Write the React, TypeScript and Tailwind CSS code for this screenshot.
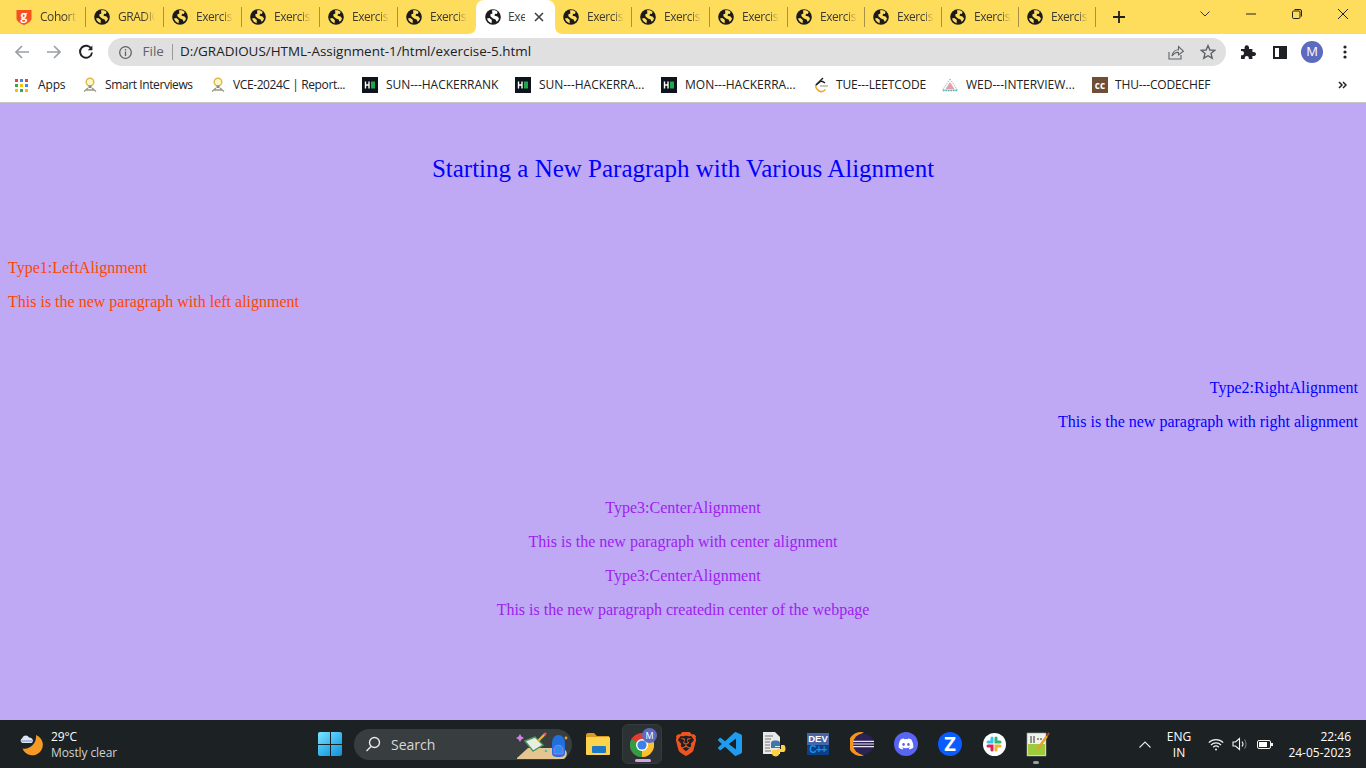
import React from "react";
import { SiBrave } from "react-icons/si";
import { FaDiscord } from "react-icons/fa";

const ui = "font-['Open_Sans','Noto_Sans',sans-serif]";

function Globe() {
  return (
    <svg width="16" height="16" viewBox="0 0 16 16" className="shrink-0">
      <circle cx="8" cy="8" r="7.8" fill="#1b1b1b" />
      <path d="M7 1.6 C9 1 11.5 1.6 12.6 3 L11.8 5 L10 4.8 L9.6 6.8 L12.6 7.4 L14 9.4 C13.6 10.8 12.6 12 11.6 12.8 L10.6 10.4 L8 9.4 L5.6 7.6 L5.2 5.4 L7.4 4.4 Z" fill="#ffdd5c" />
      <path d="M2 9.6 L4.4 9 L6.8 11 L6.6 14.2 C4.4 13.8 2.8 12 2 9.6 Z" fill="#ffdd5c" />
    </svg>
  );
}

function GlobeActive() {
  return (
    <svg width="16" height="16" viewBox="0 0 16 16" className="shrink-0">
      <circle cx="8" cy="8" r="7.8" fill="#1b1b1b" />
      <path d="M7 1.6 C9 1 11.5 1.6 12.6 3 L11.8 5 L10 4.8 L9.6 6.8 L12.6 7.4 L14 9.4 C13.6 10.8 12.6 12 11.6 12.8 L10.6 10.4 L8 9.4 L5.6 7.6 L5.2 5.4 L7.4 4.4 Z" fill="#ffffff" />
      <path d="M2 9.6 L4.4 9 L6.8 11 L6.6 14.2 C4.4 13.8 2.8 12 2 9.6 Z" fill="#ffffff" />
    </svg>
  );
}

function Tab({ label, w, sep = true, icon }: { label: string; w: string; sep?: boolean; icon?: React.ReactNode }) {
  return (
    <div className={`${w} h-[34px] flex items-center pl-2 shrink-0 relative`}>
      {icon ?? <Globe />}
      <span className="ml-2 w-[37px] overflow-hidden whitespace-nowrap text-[12px] tracking-[-0.45px] text-[#3c3a30] [mask-image:linear-gradient(to_right,black_70%,transparent)]">
        {label}
      </span>
      {sep && <div className="absolute right-0 top-[7px] h-5 w-px bg-[#a89248]" />}
    </div>
  );
}

function Cohort() {
  return (
    <div className="relative w-4 h-4 shrink-0">
      <svg width="16" height="16" viewBox="0 0 16 16">
        <path d="M0.5 1 H15.5 V10 C15 12.5 11 15 8 16 C5 15 1 12.5 0.5 10 Z" fill="#f4511e" />
      </svg>
      <span className="absolute inset-0 flex items-center justify-center text-[12px] font-bold text-white leading-none pb-[3px]">g</span>
    </div>
  );
}

function ActiveTab() {
  return (
    <div className="w-[79px] h-[34px] bg-white rounded-t-lg flex items-center pl-[9px] shrink-0 relative">
      <GlobeActive />
      <span className="ml-[7px] w-[17px] overflow-hidden whitespace-nowrap text-[12px] tracking-[-0.3px] text-[#3c4043]">Exercise</span>
      <svg width="10" height="10" viewBox="0 0 10 10" className="ml-[9px]">
        <path d="M1 1 L9 9 M9 1 L1 9" stroke="#3c4043" strokeWidth="1.6" />
      </svg>
      <svg width="8" height="8" viewBox="0 0 8 8" className="absolute left-[-8px] bottom-0">
        <path d="M8 0 V8 H0 C5 8 8 5 8 0 Z" fill="#fff" />
      </svg>
      <svg width="8" height="8" viewBox="0 0 8 8" className="absolute right-[-8px] bottom-0">
        <path d="M0 0 V8 H8 C3 8 0 5 0 0 Z" fill="#fff" />
      </svg>
    </div>
  );
}

function TabStrip() {
  return (
    <div className={`h-[34px] bg-[#ffdd5c] flex items-stretch pl-2 ${ui}`}>
      <Tab label="Cohort" w="w-[78px]" icon={<Cohort />} />
      <Tab label="GRADIOUS" w="w-[78px]" />
      <Tab label="Exercise" w="w-[78px]" />
      <Tab label="Exercise" w="w-[78px]" />
      <Tab label="Exercise" w="w-[78px]" />
      <Tab label="Exercise" w="w-[78px]" sep={false} />
      <ActiveTab />
      <Tab label="Exercise" w="w-[77px]" />
      <Tab label="Exercise" w="w-[78px]" />
      <Tab label="Exercise" w="w-[78px]" />
      <Tab label="Exercise" w="w-[77px]" />
      <Tab label="Exercise" w="w-[77px]" />
      <Tab label="Exercise" w="w-[77px]" />
      <Tab label="Exercise" w="w-[77px]" />
      <div className="w-[46px] flex items-center justify-center shrink-0">
        <svg width="12" height="12" viewBox="0 0 12 12">
          <path d="M6 0 V12 M0 6 H12" stroke="#1f1f1f" strokeWidth="1.8" />
        </svg>
      </div>
      <div className="flex-1" />
      <div className="flex items-start">
        <div className="w-[46px] h-7 flex items-center justify-center">
          <svg width="10" height="6" viewBox="0 0 10 6"><path d="M0.5 0.5 L5 5 L9.5 0.5" stroke="#333" fill="none" /></svg>
        </div>
        <div className="w-[46px] h-7 flex items-center justify-center">
          <svg width="10" height="2" viewBox="0 0 10 2"><path d="M0 1 H10" stroke="#222" /></svg>
        </div>
        <div className="w-[46px] h-7 flex items-center justify-center">
          <svg width="10" height="10" viewBox="0 0 10 10" fill="none" stroke="#222">
            <rect x="0.5" y="2" width="7.5" height="7.5" rx="1.2" />
            <path d="M2.5 0.5 H8 A1.5 1.5 0 0 1 9.5 2 V7.5" />
          </svg>
        </div>
        <div className="w-[46px] h-7 flex items-center justify-center">
          <svg width="10" height="10" viewBox="0 0 10 10"><path d="M0 0 L10 10 M10 0 L0 10" stroke="#222" /></svg>
        </div>
      </div>
    </div>
  );
}

function Toolbar() {
  return (
    <div className={`h-[34px] pt-[2px] bg-white flex items-center ${ui}`}>
      <div className="w-[108px] flex items-center pl-[14px] gap-4 shrink-0">
        <svg width="16" height="16" viewBox="0 0 16 16" fill="none" stroke="#9aa0a6" strokeWidth="1.7">
          <path d="M15 8 H2 M8 2 L2 8 L8 14" />
        </svg>
        <svg width="16" height="16" viewBox="0 0 16 16" fill="none" stroke="#9aa0a6" strokeWidth="1.7">
          <path d="M1 8 H14 M8 2 L14 8 L8 14" />
        </svg>
        <svg width="16" height="16" viewBox="0 0 16 16" fill="none" stroke="#202124" strokeWidth="1.9">
          <path d="M13.4 5 A6 6 0 1 0 14 8.5" />
          <path d="M14.4 1.6 V6.2 H9.8 Z" fill="#202124" stroke="none" />
        </svg>
      </div>
      <div className="w-[1118px] h-7 bg-[#e0e0e0] rounded-full flex items-center pl-[11px] pr-[10px] shrink-0">
        <svg width="13" height="13" viewBox="0 0 13 13" fill="none" stroke="#5f6368" strokeWidth="1.3" className="ml-[-0.5px]">
          <circle cx="6.5" cy="6.5" r="5.8" />
          <path d="M6.5 5.6 V10 M6.5 3 V4.4" />
        </svg>
        <span className="ml-[11px] text-[13.5px] text-[#5f6368] leading-none">File</span>
        <div className="w-px h-4 bg-[#9a9a9a] ml-2" />
        <span className="ml-[7px] text-[13.45px] text-[#202124] leading-none">D:/GRADIOUS/HTML-Assignment-1/html/exercise-5.html</span>
        <div className="flex-1" />
        <svg width="16" height="16" viewBox="0 0 16 16" fill="none" stroke="#5f6368" strokeWidth="1.1">
          <path d="M1 8 V15 H13 V11" />
          <path d="M4 12 C4.5 8 7.5 5.8 10.5 5.8 V2.6 L15.4 7.2 L10.5 11 V8.4 C8 8.2 5.6 9.6 4 12 Z" />
        </svg>
        <svg width="16" height="16" viewBox="0 0 16 16" fill="none" stroke="#5f6368" strokeWidth="1.4" className="ml-4">
          <path d="M8 1.6 L9.9 6 L14.7 6.4 L11 9.5 L12.2 14.2 L8 11.7 L3.8 14.2 L5 9.5 L1.3 6.4 L6.1 6 Z" />
        </svg>
      </div>
      <div className="flex items-center pl-[14px]">
        <svg width="16" height="16" viewBox="0 0 16 16" fill="#202124">
          <path d="M1 5 H4.6 C4.2 2.8 5.2 1.2 6.8 1.2 C8.4 1.2 9.4 2.8 9 5 H12.4 V8 C14.6 7.6 16 8.6 16 10 C16 11.4 14.6 12.4 12.4 12 V15 H8.8 C9.2 13.2 8.2 12 6.8 12 C5.4 12 4.4 13.2 4.8 15 H1 V11.2 C2.8 11.6 4 10.6 4 9.2 C4 7.8 2.8 6.8 1 7.2 Z" />
        </svg>
        <div className="ml-[17px] w-[14px] h-[13px] border-2 border-[#202124] flex justify-end">
          <div className="w-[6px] h-full bg-[#202124]" />
        </div>
        <div className="ml-[14px] w-[22px] h-[22px] rounded-full bg-[#5c6bc0] text-white text-[13px] flex items-center justify-center">M</div>
        <svg width="4" height="14" viewBox="0 0 4 14" fill="#202124" className="ml-[20px]">
          <circle cx="2" cy="2" r="1.6" />
          <circle cx="2" cy="7" r="1.6" />
          <circle cx="2" cy="12" r="1.6" />
        </svg>
      </div>
    </div>
  );
}

function AppsIcon() {
  const colors = ["#ea4335", "#4285f4", "#ea4335", "#34a853", "#fbbc05", "#4285f4", "#fbbc05", "#34a853", "#fbbc05"];
  return (
    <div className="grid grid-cols-3 gap-[2px] w-[13px] h-[13px] shrink-0">
      {colors.map((c, i) => (
        <div key={i} className="w-[3px] h-[3px]" style={{ backgroundColor: c }} />
      ))}
    </div>
  );
}

function BulbIcon() {
  return (
    <svg width="14" height="16" viewBox="0 0 14 16" className="shrink-0">
      <circle cx="7" cy="5" r="3.8" fill="#fff6c8" stroke="#dcb84a" strokeWidth="1.4" />
      <path d="M5.5 8.5 H8.5 V11 H5.5 Z" fill="#8a8a7a" />
      <path d="M1 14.5 L5 11 M13 14.5 L9 11 M3 13 H11" stroke="#9a9a8a" strokeWidth="1.4" />
    </svg>
  );
}

function HackerIcon() {
  return (
    <svg width="16" height="16" viewBox="0 0 16 16" className="shrink-0">
      <rect width="16" height="16" fill="#0e141e" />
      <path d="M3.5 4.5 V11.5 M7 4.5 V11.5 M3.5 8 H7" stroke="#fff" strokeWidth="1.4" />
      <rect x="9" y="4.5" width="4" height="7" fill="#1ba94c" />
    </svg>
  );
}

function LeetIcon() {
  return (
    <svg width="15" height="16" viewBox="0 0 15 16" fill="none" className="shrink-0">
      <path d="M9 1 L2 8" stroke="#222" strokeWidth="1.5" />
      <path d="M2 8 C1 10 3 13 6 14.5 C8 15 10 14 11.5 12.5" stroke="#f5a623" strokeWidth="1.6" />
      <path d="M6 9 H14" stroke="#b5b5b5" strokeWidth="1.5" />
      <path d="M2 8 L6 4.6 C7.5 3.8 9 4.2 11 6" stroke="#222" strokeWidth="1.4" />
    </svg>
  );
}

function WedIcon() {
  return (
    <svg width="16" height="14" viewBox="0 0 16 14" className="shrink-0">
      <path d="M8 1 L15.5 12 H0.5 Z" fill="none" stroke="#9bb8b8" strokeWidth="1" strokeDasharray="1.5 1" />
      <path d="M8 4 L12.5 11 H3.5 Z" fill="#e4a0a8" strokeDasharray="1 1" />
      <path d="M1 12.5 H15" stroke="#3fb6b0" strokeWidth="1.4" strokeDasharray="1.5 1" />
    </svg>
  );
}

function Bookmark({ w, icon, label, text }: { w: string; icon: React.ReactNode; label: string; text: string }) {
  return (
    <div className={`${w} flex items-center shrink-0`}>
      {icon}
      <span className={`${text} text-[12px] text-[#202124] whitespace-nowrap`}>{label}</span>
    </div>
  );
}

function Bookmarks() {
  return (
    <div className={`h-[35px] bg-white border-b border-[#c8c8c8] flex items-center pl-[15px] ${ui}`}>
      <Bookmark w="w-[68px]" icon={<AppsIcon />} label="Apps" text="ml-[10px] tracking-[-0.15px]" />
      <Bookmark w="w-[128px]" icon={<BulbIcon />} label="Smart Interviews" text="ml-2 tracking-[-0.4px]" />
      <Bookmark w="w-[151px]" icon={<BulbIcon />} label="VCE-2024C | Report..." text="ml-2 tracking-[-0.4px]" />
      <Bookmark w="w-[153px]" icon={<HackerIcon />} label="SUN---HACKERRANK" text="ml-2 tracking-[-0.03px]" />
      <Bookmark w="w-[146px]" icon={<HackerIcon />} label="SUN---HACKERRA..." text="ml-2 tracking-[-0.03px]" />
      <Bookmark w="w-[153px]" icon={<HackerIcon />} label="MON---HACKERRA..." text="ml-2 tracking-[0px]" />
      <Bookmark w="w-[128px]" icon={<LeetIcon />} label="TUE---LEETCODE" text="ml-[7px] tracking-[-0.15px]" />
      <Bookmark w="w-[150px]" icon={<WedIcon />} label="WED---INTERVIEW..." text="ml-2 tracking-[0px]" />
      <Bookmark
        w="w-[246px]"
        icon={
          <div className="w-4 h-4 bg-[#6f4e37] text-white text-[10px] font-bold leading-none flex items-center justify-center shrink-0">cc</div>
        }
        label="THU---CODECHEF"
        text="ml-[7px] tracking-[-0.15px]"
      />
      <svg width="9" height="8" viewBox="0 0 9 8" fill="none" stroke="#202124" strokeWidth="1.5">
        <path d="M1 1 L4 4 L1 7 M5 1 L8 4 L5 7" />
      </svg>
    </div>
  );
}

function Page() {
  const p = "m-0 text-[16px] leading-[18px]";
  return (
    <main className="flex-1 bg-[#bfa9f5] px-2 pt-[52px] font-['Liberation_Serif',serif]">
      <h2 className="m-0 text-center text-[25px] leading-[27px] font-normal text-[#0000ff]">
        Starting a New Paragraph with Various Alignment
      </h2>
      <section className="mt-[77px] flex flex-col gap-4 text-[#ff4500]">
        <p className={p}>Type1:LeftAlignment</p>
        <p className={p}>This is the new paragraph with left alignment</p>
      </section>
      <section className="mt-[68px] flex flex-col gap-4 text-right text-[#0000ff]">
        <p className={p}>Type2:RightAlignment</p>
        <p className={p}>This is the new paragraph with right alignment</p>
      </section>
      <section className="mt-[68px] flex flex-col gap-4 text-center text-[#a020f0]">
        <p className={p}>Type3:CenterAlignment</p>
        <p className={p}>This is the new paragraph with center alignment</p>
        <p className={p}>Type3:CenterAlignment</p>
        <p className={p}>This is the new paragraph createdin center of the webpage</p>
      </section>
    </main>
  );
}

function Weather() {
  return (
    <div className="flex items-center w-[318px] shrink-0 pl-5">
      <svg width="24" height="24" viewBox="0 0 24 24" className="shrink-0">
        <path d="M16 3 A10.5 10.5 0 1 1 2.5 16.5 C9 18 17 12 16 3 Z" fill="#f59a23" />
        <path d="M3 11 C0.4 11 -0.2 7.4 2.2 6.6 C2.8 3 7.8 2.4 9 5.6 C12.4 5.4 14.6 9.6 11.4 11 Z" fill="#dfe7f4" />
        <path d="M1.4 9 H12.6" stroke="#7f9ed0" strokeWidth="1.2" />
      </svg>
      <div className="ml-[7px] pt-[2px] flex flex-col text-[12px] tracking-[-0.1px] leading-4">
        <span className="text-white">29°C</span>
        <span className="text-[#cfd2d2]">Mostly clear</span>
      </div>
    </div>
  );
}

function StartIcon() {
  return (
    <div className="grid grid-cols-2 gap-[1px] w-6 h-6 shrink-0">
      <div className="bg-gradient-to-br from-[#7de4ff] to-[#35b8ef] rounded-tl-[2px]" />
      <div className="bg-gradient-to-br from-[#5fd5fb] to-[#1ea4e6] rounded-tr-[2px]" />
      <div className="bg-gradient-to-br from-[#49c9f7] to-[#1a9fe2] rounded-bl-[2px]" />
      <div className="bg-gradient-to-br from-[#3cbcf2] to-[#0f8ed8] rounded-br-[2px]" />
    </div>
  );
}

function SearchArt() {
  return (
    <svg width="56" height="28" viewBox="0 0 56 28" className="shrink-0">
      <path d="M1 26 L12 16 H46 C52 18 52 24 48 27 H1 Z" fill="#e6c590" />
      <path d="M9 9 L19 5 L27 13 L17 19 Z" fill="#e8efe0" stroke="#4d9a68" strokeWidth="1.4" />
      <path d="M22 9 L29 2" stroke="#f0b429" strokeWidth="2.4" />
      <path d="M28 3 L30 1" stroke="#e8604c" strokeWidth="2.4" />
      <path d="M2 2 L3.4 4.6 L6 6 L3.4 7.4 L2 10 L0.6 7.4 L-2 6 L0.6 4.6 Z" fill="#d77fe8" transform="translate(2 0)" />
      <circle cx="30" cy="19" r="1.3" fill="#3fc4c4" />
      <circle cx="50" cy="6" r="1.4" fill="#e8a03c" />
      <path d="M36 12 C36 6 39 3 42.5 3 C46 3 49 6 49 12 V21 C49 24 47 25 42.5 25 C38 25 36 24 36 21 Z" fill="#1f6fe0" />
      <path d="M38 17 C38 12 47 12 47 17 V22 H38 Z" fill="#2f8bf0" stroke="#a77be0" strokeWidth="1" />
    </svg>
  );
}

function Explorer() {
  return (
    <svg width="24" height="22" viewBox="0 0 24 22">
      <path d="M0 2 C0 1 1 0 2 0 H8 L11 3 H23 V6 H0 Z" fill="#d99a1e" />
      <rect x="0" y="4" width="24" height="18" rx="1" fill="#fcd34d" />
      <rect x="6" y="13" width="14" height="7" rx="1" fill="#1e78c8" />
    </svg>
  );
}

function VsCode() {
  return (
    <svg width="24" height="24" viewBox="0 0 24 24" fill="#1f9cf0">
      <path d="M23.15 2.587L18.21.21a1.494 1.494 0 0 0-1.705.29l-9.46 8.63-4.12-3.128a.999.999 0 0 0-1.276.057L.327 7.261A1 1 0 0 0 .326 8.74L3.899 12 .326 15.26a1 1 0 0 0 .001 1.479L1.65 17.94a.999.999 0 0 0 1.276.057l4.12-3.128 9.46 8.63a1.492 1.492 0 0 0 1.704.29l4.942-2.377A1.5 1.5 0 0 0 24 20.06V3.939a1.5 1.5 0 0 0-.85-1.352zm-5.146 14.861L10.826 12l7.178-5.448v10.896z" />
    </svg>
  );
}

function Chrome() {
  return (
    <div className="relative w-10 h-10 rounded-md bg-[#2c3133] border border-[#363b3d] flex items-center justify-center shrink-0">
      <svg width="24" height="24" viewBox="0 0 24 24" className="mt-[1px] ml-[-1px]">
        <circle cx="12" cy="12" r="12" fill="#e33b2e" />
        <path d="M12 12 L1.6 6 A12 12 0 0 0 12 24 Z" fill="#2f9e44" />
        <path d="M12 12 L12 24 A12 12 0 0 0 22.4 6 H12 Z" fill="#fbc02d" />
        <circle cx="12" cy="12" r="6" fill="#fff" />
        <circle cx="12" cy="12" r="4.6" fill="#3f7fe8" />
      </svg>
      <div className="absolute right-[4px] top-[3px] w-[15px] h-[15px] rounded-full bg-[#5c6bc0] text-white text-[9px] leading-none flex items-center justify-center">M</div>
      <div className="absolute bottom-[1px] left-[12px] w-4 h-[3px] rounded-full bg-[#d8a0e8]" />
    </div>
  );
}

function Python() {
  return (
    <svg width="24" height="26" viewBox="0 0 24 26">
      <path d="M1 1 H13 L18 6 V23 H1 Z" fill="#e8e8e8" />
      <path d="M3 5 H11 M3 8 H9 M3 11 H8 M3 14 H8 M3 17 H8 M3 20 H9" stroke="#777" strokeWidth="1" />
      <path d="M9 17 V12 C9 10 11 9.5 14 9.5 C17 9.5 18 10.5 18 12 V15 H13 V16 H18 V17 Z" fill="#3c78aa" />
      <path d="M22 14 C24 15 24 20 22 21 H17 V23 C17 25 14 26 12 25 C10 24.5 10 23 10 22 V19 H15 V18 H19 V14 Z" fill="#fdd343" />
    </svg>
  );
}

function DevCpp() {
  return (
    <div className="w-[22px] h-[22px] bg-[#0b3f86] flex flex-col items-center font-['Liberation_Sans',sans-serif] font-bold leading-none overflow-hidden">
      <span className="text-[9.5px] text-white bg-[#4666a8] w-full text-center pt-[1px] pb-[1px]">DEV</span>
      <span className="text-[10px] text-[#1e8fe8] tracking-[-0.5px]">C++</span>
    </div>
  );
}

function Eclipse() {
  return (
    <svg width="24" height="24" viewBox="0 0 24 24">
      <path d="M14 0.5 A12 12 0 1 0 14 23.5 A12 12 0 0 1 14 0.5 Z" fill="#f7941e" />
      <circle cx="13.5" cy="12" r="10.5" fill="#2c2255" />
      <path d="M3 8.8 H24 V10 H3 Z M3 11.4 H24 V12.6 H3 Z M3 14 H24 V15.2 H3 Z" fill="#e8e4f4" />
    </svg>
  );
}

function Slack() {
  return (
    <div className="w-[23px] h-[23px] rounded-full bg-white flex items-center justify-center">
      <svg width="16" height="16" viewBox="0 0 16 16" strokeWidth="3" strokeLinecap="round">
        <path d="M6 2 V6 H2" stroke="#36c5f0" fill="none" />
        <path d="M14 6 H10 V2" stroke="#2eb67d" fill="none" />
        <path d="M10 14 V10 H14" stroke="#ecb22e" fill="none" />
        <path d="M2 10 H6 V14" stroke="#e01e5a" fill="none" />
      </svg>
    </div>
  );
}

function Notepad() {
  return (
    <div className="relative">
      <svg width="24" height="26" viewBox="0 0 24 26">
        <rect x="1" y="2" width="19" height="23" fill="#f0f3ea" stroke="#999" strokeWidth="0.6" />
        <rect x="2" y="13" width="17" height="11" fill="#9ccc3c" />
        <path d="M5 5 V12 M8 5 V12 M11 8 H13 M14 8 H16" stroke="#333" strokeWidth="1" />
        <path d="M11 19 L21 5" stroke="#e5a229" strokeWidth="2.4" />
        <path d="M21 5 L23 2" stroke="#b8452e" strokeWidth="2" />
      </svg>
      <div className="absolute left-[7px] bottom-[-7px] w-[6px] h-[3px] rounded-full bg-[#9a9d9e]" />
    </div>
  );
}

function Slot({ children }: { children: React.ReactNode }) {
  return <div className="w-11 h-10 flex items-center justify-center shrink-0">{children}</div>;
}

function Taskbar() {
  return (
    <div className={`h-12 bg-[#1c2224] flex items-center shrink-0 ${ui}`}>
      <Weather />
      <StartIcon />
      <div className="ml-3 w-[218px] h-[31px] rounded-full bg-[#383e40] flex items-center pl-[11px] shrink-0 relative">
        <svg width="16" height="16" viewBox="0 0 16 16" fill="none" stroke="#e8e8e8" strokeWidth="1.4">
          <circle cx="9.5" cy="6.5" r="5" />
          <path d="M6 10.5 L1.5 15" />
        </svg>
        <span className="ml-[10px] text-[14px] text-[#d8d8d8]">Search</span>
        <div className="absolute right-0 bottom-0">
          <SearchArt />
        </div>
      </div>
      <div className="ml-[4px] flex items-center">
        <Slot><Explorer /></Slot>
        <Slot><Chrome /></Slot>
        <Slot><SiBrave className="text-[#f1531f] text-[24px]" /></Slot>
        <Slot><VsCode /></Slot>
        <Slot><Python /></Slot>
        <Slot><DevCpp /></Slot>
        <Slot><Eclipse /></Slot>
        <Slot>
          <div className="w-6 h-6 rounded-full bg-[#5865f2] flex items-center justify-center">
            <FaDiscord className="text-white text-[16px]" />
          </div>
        </Slot>
        <Slot>
          <div className="w-6 h-6 rounded-full bg-[#0b5cff] flex items-center justify-center text-white text-[20px] font-bold leading-none">Z</div>
        </Slot>
        <Slot><Slack /></Slot>
        <Slot><Notepad /></Slot>
      </div>
      <div className="flex-1" />
      <div className="flex items-center text-white text-[12px]">
        <svg width="12" height="7" viewBox="0 0 12 7" fill="none" stroke="#e8e8e8" strokeWidth="1.1">
          <path d="M0.5 6.5 L6 1 L11.5 6.5" />
        </svg>
        <div className="ml-[16px] pt-[2px] w-6 flex flex-col items-center leading-4">
          <span>ENG</span>
          <span>IN</span>
        </div>
        <svg width="16" height="13" viewBox="0 0 16 13" fill="none" stroke="#f2f2f2" strokeWidth="1.2" className="ml-[17px]">
          <path d="M0.8 4.6 C4.8 0.6 11.2 0.6 15.2 4.6 M3 7 C5.8 4.2 10.2 4.2 13 7 M5.2 9.2 C6.8 7.8 9.2 7.8 10.8 9.2" />
          <circle cx="8" cy="11.5" r="1" fill="#f2f2f2" stroke="none" />
        </svg>
        <svg width="17" height="14" viewBox="0 0 17 14" fill="none" stroke="#f2f2f2" strokeWidth="1.1" className="ml-[8px]">
          <path d="M1 5 H3.5 L7.5 1.5 V12.5 L3.5 9 H1 Z" />
          <path d="M10 4.5 C11.2 6 11.2 8 10 9.5" />
          <path d="M12.5 2.5 C14.6 5 14.6 9 12.5 11.5" stroke="#777" />
        </svg>
        <div className="ml-[8px] flex items-center">
          <div className="w-[14px] h-[9px] border border-[#f2f2f2] rounded-[2px] p-[1px]">
            <div className="w-2 h-full bg-white" />
          </div>
          <div className="w-[2px] h-[3px] bg-[#f2f2f2]" />
        </div>
        <div className="ml-[15px] mr-[15px] pt-[1px] w-[63px] flex flex-col items-end leading-4">
          <span>22:46</span>
          <span className="whitespace-nowrap">24-05-2023</span>
        </div>
      </div>
    </div>
  );
}

export default function App() {
  return (
    <div className="w-[1366px] h-[768px] overflow-hidden flex flex-col">
      <TabStrip />
      <Toolbar />
      <Bookmarks />
      <Page />
      <Taskbar />
    </div>
  );
}
